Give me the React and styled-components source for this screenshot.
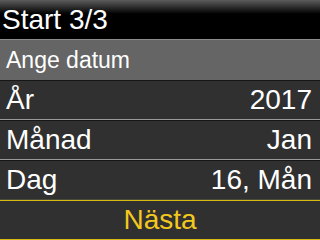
import React from 'react';
import styled, { createGlobalStyle } from 'styled-components';

const Global = createGlobalStyle`
  html, body { margin: 0; padding: 0; background: #000; }
  body { font-family: "Liberation Sans", Arial, sans-serif; }
`;

const Screen = styled.div`
  width: 320px;
  height: 240px;
  display: flex;
  flex-direction: column;
  background: #303030;
  color: #fff;
  overflow: hidden;
`;

const Header = styled.div`
  height: 39px;
  display: flex;
  align-items: center;
  padding-left: 2px;
  font-size: 28px;
  background: linear-gradient(#5c5c5c 0, #000 14px, #000 100%);
  border-bottom: 1px solid #8c8c8c;
`;

const SubTitle = styled.div`
  height: 40px;
  display: flex;
  align-items: center;
  padding-left: 6px;
  font-size: 23px;
  background: #656565;
`;

const Row = styled.div`
  height: 38px;
  display: flex;
  align-items: center;
  justify-content: space-between;
  padding: 0 8px 0 6px;
  font-size: 28px;
  background: #303030;
  border-top: 1px solid #161616;
  border-bottom: 1px solid ${p => (p.$last ? '#4a4a3a' : '#9a9a9a')};
`;

const NextButton = styled.div`
  height: 38px;
  display: flex;
  align-items: center;
  justify-content: center;
  font-size: 28px;
  color: #f2c81e;
  background: #303030;
  border-top: 1px solid #d6bc10;
  border-bottom: 1px solid #d6bc10;
`;

const rows = [
  { label: 'År', value: '2017' },
  { label: 'Månad', value: 'Jan' },
  { label: 'Dag', value: '16, Mån' },
];

export default function App() {
  return (
    <Screen>
      <Global />
      <Header>Start 3/3</Header>
      <SubTitle>Ange datum</SubTitle>
      {rows.map((r, i) => (
        <Row key={r.label} $last={i === rows.length - 1}>
          <span>{r.label}</span>
          <span>{r.value}</span>
        </Row>
      ))}
      <NextButton>Nästa</NextButton>
    </Screen>
  );
}
